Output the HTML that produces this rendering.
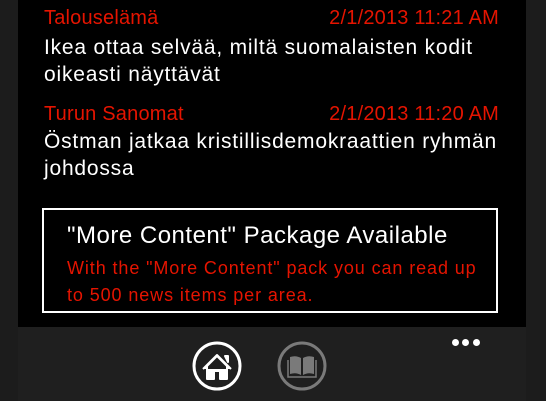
<html><head><style>
body{margin:0;width:546px;height:401px;background:#1c1c1c;position:relative;overflow:hidden;font-family:"Liberation Sans",sans-serif}
.p{position:absolute;left:18px;top:0;width:508px;height:327px;background:#000}
.bar{position:absolute;left:18px;top:327px;width:508px;height:74px;background:#1f1f1f}
.t{position:absolute;white-space:nowrap;line-height:1}
.r{color:#e51400;font-size:20px;letter-spacing:0.2px}
.w{color:#fff;font-size:21px;letter-spacing:0.8px}
.box{position:absolute;left:42px;top:208px;width:452px;height:101px;border:2px solid #fff}
.d{position:absolute;width:7px;height:7px;border-radius:50%;background:#fff;top:339px}
</style></head><body>
<div class="p"></div>
<div class="bar"></div>
<div class="t r" style="left:44px;top:8px">Talouselämä</div>
<div class="t r" style="right:47px;top:8px">2/1/2013 11:21 AM</div>
<div class="t w" style="left:44px;top:37px">Ikea ottaa selvää, miltä suomalaisten kodit</div>
<div class="t w" style="left:44px;top:64px">oikeasti näyttävät</div>
<div class="t r" style="left:44px;top:104px">Turun Sanomat</div>
<div class="t r" style="right:47px;top:104px">2/1/2013 11:20 AM</div>
<div class="t w" style="left:44px;top:131px">Östman jatkaa kristillisdemokraattien ryhmän</div>
<div class="t w" style="left:44px;top:158px">johdossa</div>
<div class="box"></div>
<div class="t" style="left:67px;top:224px;color:#fff;font-size:24px;letter-spacing:0.5px">"More Content" Package Available</div>
<div class="t" style="left:67px;top:259px;color:#e51400;font-size:18px;letter-spacing:0.9px">With the "More Content" pack you can read up</div>
<div class="t" style="left:67px;top:286px;color:#e51400;font-size:18px;letter-spacing:0.9px">to 500 news items per area.</div>
<svg style="position:absolute;left:0;top:0" width="546" height="401">
<circle cx="217" cy="366" r="23" fill="none" stroke="#fff" stroke-width="3"/>
<path d="M203 369 L217 355 L231 369 M207 366 V379 H214 V371 H220 V379 H227 V366 L217 356 Z M225 356 h3 v6 z" fill="#fff" stroke="#fff" stroke-width="2" stroke-linejoin="round"/>
<circle cx="302" cy="366" r="23" fill="none" stroke="#7a7a7a" stroke-width="3"/>
<path d="M290 357 Q296 355 301 358 V375 Q296 372 290 374 Z M303 358 Q308 355 314 357 V374 Q308 372 303 375 Z" fill="#7a7a7a"/>
<path d="M288 360 V377 H316 V360" fill="none" stroke="#7a7a7a" stroke-width="1.5"/>
</svg>
<div class="d" style="left:452px"></div><div class="d" style="left:462px"></div><div class="d" style="left:473px"></div>
</body></html>
